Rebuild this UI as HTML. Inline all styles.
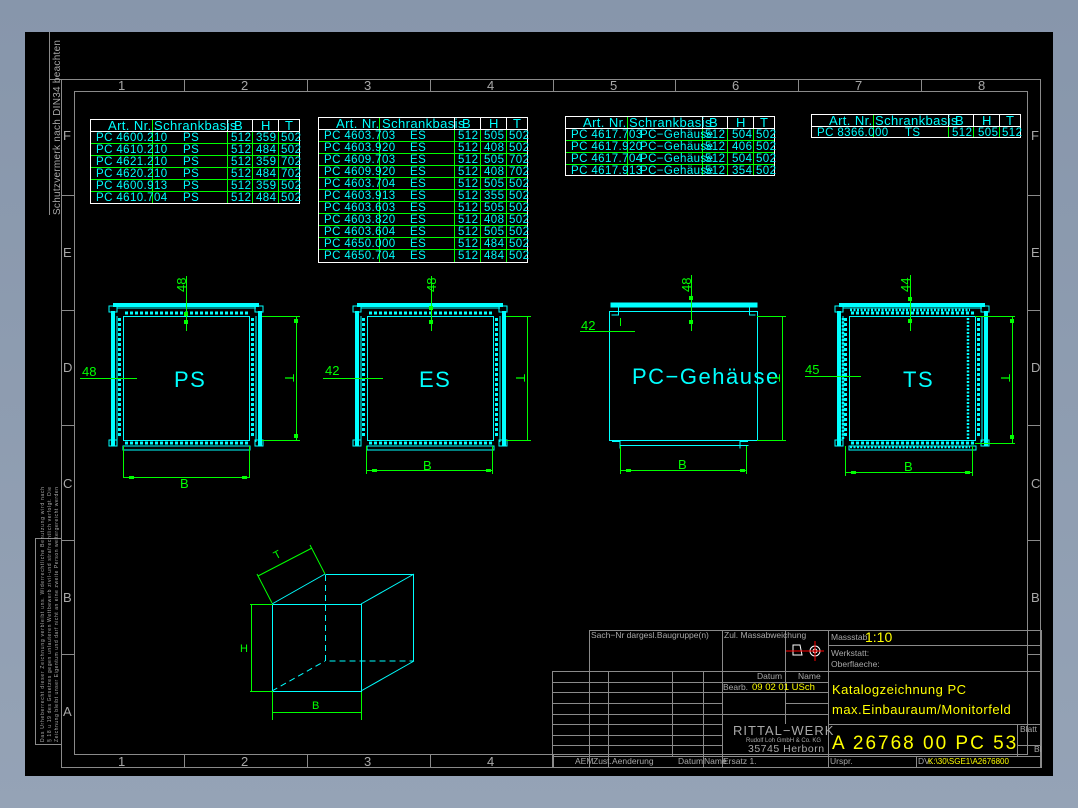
<!DOCTYPE html>
<html><head><meta charset="utf-8"><style>
html,body{margin:0;padding:0;background:#8c9bb0;}
body{width:1078px;height:808px;overflow:hidden;background:linear-gradient(#8796ab,#95a3b6);}
svg{position:absolute;left:0;top:0;}
text{font-family:"Liberation Sans",sans-serif;}
.c{fill:#00ffff;font-size:11.5px;letter-spacing:0.4px;}
.g{fill:#00ff00;}
.w{fill:#a8a8a8;}
.y{fill:#ffff00;}
.big{font-size:22px;letter-spacing:1.5px;}
</style></head><body>
<svg width="1078" height="808" viewBox="0 0 1078 808">
<defs>
<g id="cab">
 <rect x="113" y="303" width="146" height="4" fill="#00ffff"/>
 <rect x="111" y="311" width="4" height="135" fill="#00ffff"/>
 <rect x="258" y="311" width="4" height="135" fill="#00ffff"/>
 <rect x="109" y="306" width="8" height="6" fill="none" stroke="#00ffff"/>
 <rect x="255" y="306" width="8" height="6" fill="none" stroke="#00ffff"/>
 <rect x="109" y="440" width="8" height="6" fill="none" stroke="#00ffff"/>
 <rect x="255" y="440" width="8" height="6" fill="none" stroke="#00ffff"/>
 <line x1="117" y1="308" x2="256" y2="308" stroke="#00ffff"/>
 <line x1="125" y1="313" x2="248" y2="313" stroke="#00ffff" stroke-width="3" stroke-dasharray="3 2"/>
 <line x1="125" y1="443" x2="248" y2="443" stroke="#00ffff" stroke-width="3" stroke-dasharray="3 2"/>
 <line x1="119.5" y1="318" x2="119.5" y2="438" stroke="#00ffff" stroke-width="3" stroke-dasharray="3 2"/>
 <line x1="252.5" y1="318" x2="252.5" y2="438" stroke="#00ffff" stroke-width="3" stroke-dasharray="3 2"/>
 <rect x="123.5" y="316.5" width="126" height="124" fill="none" stroke="#00ffff"/>
 <line x1="117" y1="316" x2="117" y2="442" stroke="#00ffff"/>
 <line x1="256" y1="316" x2="256" y2="442" stroke="#00ffff"/>
 <rect x="123" y="446" width="127" height="4" fill="none" stroke="#00ffff"/>
</g>
</defs>
<rect x="25" y="32" width="1028" height="744" fill="#000"/>
<g stroke="#8a8a8a" fill="none" stroke-width="1">
 <rect x="61.5" y="79.5" width="979" height="688"/>
 <rect x="74.5" y="91.5" width="953" height="663"/>
 <line x1="49.5" y1="32" x2="49.5" y2="215"/>
 <line x1="49.5" y1="79.5" x2="61.5" y2="79.5"/>
 <rect x="35.5" y="538.5" width="26" height="206"/>
 <path d="M184.5 79v12M307.5 79v12M430.5 79v12M553.5 79v12M675.5 79v12M798.5 79v12M921.5 79v12M184.5 755v13M307.5 755v13M430.5 755v13M553.5 755v13M61 195.5h13M61 310.5h13M61 425.5h13M61 540.5h13M61 654.5h13M1028 195.5h13M1028 310.5h13M1028 425.5h13M1028 540.5h13M1028 654.5h13"/>
</g>
<g class="w" font-size="13">
 <text x="118" y="90">1</text><text x="241" y="90">2</text><text x="364" y="90">3</text><text x="487" y="90">4</text><text x="610" y="90">5</text><text x="732" y="90">6</text><text x="855" y="90">7</text><text x="978" y="90">8</text>
 <text x="118" y="766">1</text><text x="241" y="766">2</text><text x="364" y="766">3</text><text x="487" y="766">4</text>
 <text x="63" y="140">F</text><text x="63" y="257">E</text><text x="63" y="372">D</text><text x="63" y="488">C</text><text x="63" y="602">B</text><text x="63" y="716">A</text>
 <text x="1031" y="140">F</text><text x="1031" y="257">E</text><text x="1031" y="372">D</text><text x="1031" y="488">C</text><text x="1031" y="602">B</text>
</g>
<text class="w" font-size="10" transform="translate(60,215) rotate(-90)" textLength="175">Schutzvermerk nach DIN34 beachten</text>
<g class="w" font-size="5">
 <text transform="translate(44,742) rotate(-90)" textLength="255">Das Urheberrecht dieser Zeichnung verbleibt uns. Widerrechtliche Benutzung wird nach</text>
 <text transform="translate(51,742) rotate(-90)" textLength="255">§ 18 u 19 des Gesetzes gegen unlauteren Wettbewerb zivil-und strafrechtlich verfolgt. Die</text>
 <text transform="translate(58,742) rotate(-90)" textLength="255">Zeichnung bleibt unser Eigentum und darf nicht an eine zweite Person weitergereicht werden</text>
</g>

<!-- Table 1 -->
<g stroke="#00ff00" fill="none"><path d="M90 143.5h210M90 155.5h210M90 167.5h210M90 179.5h210M90 191.5h210M152.5 119v85M227.5 119v85M252.5 119v85M278.5 119v85"/></g>
<g stroke="#fff" fill="none"><rect x="90.5" y="119.5" width="209" height="84"/><path d="M90 131.5h210M227.5 119v12M252.5 119v12M278.5 119v12"/></g>
<g class="c">
 <text x="108" y="130" style="font-size:13px">Art. Nr.</text><text x="154" y="130" style="font-size:13px">Schrankbasis</text><text x="234" y="130" style="font-size:13px">B</text><text x="261" y="130" style="font-size:13px">H</text><text x="285" y="130" style="font-size:13px">T</text>
 <text x="96" y="141">PC 4600.210</text><text x="183" y="141">PS</text><text x="231" y="141">512</text><text x="256" y="141">359</text><text x="281" y="141">502</text>
 <text x="96" y="153">PC 4610.210</text><text x="183" y="153">PS</text><text x="231" y="153">512</text><text x="256" y="153">484</text><text x="281" y="153">502</text>
 <text x="96" y="165">PC 4621.210</text><text x="183" y="165">PS</text><text x="231" y="165">512</text><text x="256" y="165">359</text><text x="281" y="165">702</text>
 <text x="96" y="177">PC 4620.210</text><text x="183" y="177">PS</text><text x="231" y="177">512</text><text x="256" y="177">484</text><text x="281" y="177">702</text>
 <text x="96" y="189">PC 4600.913</text><text x="183" y="189">PS</text><text x="231" y="189">512</text><text x="256" y="189">359</text><text x="281" y="189">502</text>
 <text x="96" y="201">PC 4610.704</text><text x="183" y="201">PS</text><text x="231" y="201">512</text><text x="256" y="201">484</text><text x="281" y="201">502</text>
</g>

<!-- Table 2 -->
<g stroke="#00ff00" fill="none"><path d="M318 141.5h210M318 153.5h210M318 165.5h210M318 177.5h210M318 189.5h210M318 201.5h210M318 213.5h210M318 225.5h210M318 237.5h210M318 249.5h210M379.5 117v146M454.5 117v146M480.5 117v146M506.5 117v146"/></g>
<g stroke="#fff" fill="none"><rect x="318.5" y="117.5" width="209" height="145"/><path d="M318 129.5h210M454.5 117v12M480.5 117v12M506.5 117v12"/></g>
<g class="c">
 <text x="336" y="128" style="font-size:13px">Art. Nr.</text><text x="382" y="128" style="font-size:13px">Schrankbasis</text><text x="462" y="128" style="font-size:13px">B</text><text x="489" y="128" style="font-size:13px">H</text><text x="513" y="128" style="font-size:13px">T</text>
 <text x="324" y="139">PC 4603.703</text><text x="410" y="139">ES</text><text x="458" y="139">512</text><text x="484" y="139">505</text><text x="509" y="139">502</text>
 <text x="324" y="151">PC 4603.920</text><text x="410" y="151">ES</text><text x="458" y="151">512</text><text x="484" y="151">408</text><text x="509" y="151">502</text>
 <text x="324" y="163">PC 4609.703</text><text x="410" y="163">ES</text><text x="458" y="163">512</text><text x="484" y="163">505</text><text x="509" y="163">702</text>
 <text x="324" y="175">PC 4609.920</text><text x="410" y="175">ES</text><text x="458" y="175">512</text><text x="484" y="175">408</text><text x="509" y="175">702</text>
 <text x="324" y="187">PC 4603.704</text><text x="410" y="187">ES</text><text x="458" y="187">512</text><text x="484" y="187">505</text><text x="509" y="187">502</text>
 <text x="324" y="199">PC 4603.913</text><text x="410" y="199">ES</text><text x="458" y="199">512</text><text x="484" y="199">355</text><text x="509" y="199">502</text>
 <text x="324" y="211">PC 4603.603</text><text x="410" y="211">ES</text><text x="458" y="211">512</text><text x="484" y="211">505</text><text x="509" y="211">502</text>
 <text x="324" y="223">PC 4603.820</text><text x="410" y="223">ES</text><text x="458" y="223">512</text><text x="484" y="223">408</text><text x="509" y="223">502</text>
 <text x="324" y="235">PC 4603.604</text><text x="410" y="235">ES</text><text x="458" y="235">512</text><text x="484" y="235">505</text><text x="509" y="235">502</text>
 <text x="324" y="247">PC 4650.000</text><text x="410" y="247">ES</text><text x="458" y="247">512</text><text x="484" y="247">484</text><text x="509" y="247">502</text>
 <text x="324" y="259">PC 4650.704</text><text x="410" y="259">ES</text><text x="458" y="259">512</text><text x="484" y="259">484</text><text x="509" y="259">502</text>
</g>

<!-- Table 3 -->
<g stroke="#00ff00" fill="none"><path d="M565 140.5h210M565 152.5h210M565 164.5h210M627.5 116v60M702.5 116v60M727.5 116v60M753.5 116v60"/></g>
<g stroke="#fff" fill="none"><rect x="565.5" y="116.5" width="209" height="59"/><path d="M565 128.5h210M702.5 116v12M727.5 116v12M753.5 116v12"/></g>
<g class="c">
 <text x="583" y="127" style="font-size:13px">Art. Nr.</text><text x="629" y="127" style="font-size:13px">Schrankbasis</text><text x="709" y="127" style="font-size:13px">B</text><text x="736" y="127" style="font-size:13px">H</text><text x="760" y="127" style="font-size:13px">T</text>
 <text x="571" y="138">PC 4617.703</text><text x="640" y="138">PC−Gehäuse</text><text x="705" y="138">512</text><text x="732" y="138">504</text><text x="756" y="138">502</text>
 <text x="571" y="150">PC 4617.920</text><text x="640" y="150">PC−Gehäuse</text><text x="705" y="150">512</text><text x="732" y="150">406</text><text x="756" y="150">502</text>
 <text x="571" y="162">PC 4617.704</text><text x="640" y="162">PC−Gehäuse</text><text x="705" y="162">512</text><text x="732" y="162">504</text><text x="756" y="162">502</text>
 <text x="571" y="174">PC 4617.913</text><text x="640" y="174">PC−Gehäuse</text><text x="705" y="174">512</text><text x="732" y="174">354</text><text x="756" y="174">502</text>
</g>

<!-- Table 4 -->
<g stroke="#00ff00" fill="none"><path d="M873.5 114v24M948.5 114v24M973.5 114v24M999.5 114v24"/></g>
<g stroke="#fff" fill="none"><rect x="811.5" y="114.5" width="209" height="23"/><path d="M811 126.5h210M948.5 114v12M973.5 114v12M999.5 114v12"/></g>
<g class="c">
 <text x="829" y="125" style="font-size:13px">Art. Nr.</text><text x="875" y="125" style="font-size:13px">Schrankbasis</text><text x="955" y="125" style="font-size:13px">B</text><text x="982" y="125" style="font-size:13px">H</text><text x="1006" y="125" style="font-size:13px">T</text>
 <text x="817" y="136">PC 8366.000</text><text x="905" y="136">TS</text><text x="952" y="136">512</text><text x="978" y="136">505</text><text x="1002" y="136">512</text>
</g>

<!-- Cabinets -->
<use href="#cab"/>
<use href="#cab" transform="translate(244,0)"/>
<g transform="translate(726,0)"><use href="#cab"/></g>
<g stroke="#00ffff" fill="none" stroke-width="2.5" stroke-dasharray="2 1.5">
 <line x1="843" y1="318" x2="843" y2="440"/><line x1="968" y1="318" x2="968" y2="440"/>
 <line x1="850" y1="310" x2="970" y2="310"/><line x1="850" y1="447" x2="970" y2="447"/>
</g>
<!-- PC-Gehaeuse -->
<g stroke="#00ffff" fill="none">
 <rect x="611" y="303" width="146" height="4" fill="#00ffff"/>
 <path d="M610.5 311.5h8v-5M757.5 311.5h-8v-5M618.5 311v4h-7M749.5 311v4h6"/>
 <rect x="609.5" y="311.5" width="148" height="129"/>
 <path d="M612 441.5h8v7M748 441.5h-8v7M620.5 445.5h128"/>
 <line x1="620" y1="311.5" x2="748" y2="311.5"/>
</g>
<!-- cabinet labels -->
<g fill="#00ffff">
 <text class="big" x="174" y="387">PS</text><text class="big" x="419" y="387">ES</text><text class="big" x="632" y="384">PC−Gehäuse</text><text class="big" x="903" y="387">TS</text>
</g>
<!-- dimensions -->
<g stroke="#00ff00" fill="none">
 <path d="M123.5 446v32M249.5 446v32M123 477.5h127"/>
 <path d="M262 316.5h38M262 440.5h38M296.5 316v125"/>
 <path d="M186.5 276v55M80 378.5h57"/>
 <path d="M366.5 446v28M492.5 446v28M366 470.5h127"/>
 <path d="M506 316.5h25M506 440.5h25M527.5 316v125"/>
 <path d="M431.5 276v55M323 378.5h60"/>
 <path d="M620.5 446v28M746.5 446v28M620 470.5h127"/>
 <path d="M757 316.5h29M757 440.5h29M782.5 316v125"/>
 <path d="M691.5 275v56M580 331.5h55M620.5 318v8"/>
 <path d="M845.5 446v30M972.5 446v30M845 472.5h128"/>
 <path d="M975 316.5h40M975 443.5h40M1012.5 316v128"/>
 <path d="M910.5 275v56M805 376.5h56"/>
</g>
<g fill="#00ff00">
 <rect x="184" y="312" width="4" height="4"/><rect x="184" y="320" width="4" height="4"/>
 <rect x="429" y="306" width="4" height="4"/><rect x="429" y="320" width="4" height="4"/>
 <rect x="689" y="296" width="4" height="4"/><rect x="689" y="320" width="4" height="4"/>
 <rect x="908" y="297" width="4" height="4"/><rect x="908" y="319" width="4" height="4"/>
 <rect x="294" y="319" width="4" height="4"/><rect x="294" y="434" width="4" height="4"/>
 <rect x="129" y="476" width="5" height="3"/><rect x="242" y="476" width="5" height="3"/>
 <rect x="372" y="469" width="5" height="3"/><rect x="486" y="469" width="5" height="3"/>
 <rect x="626" y="469" width="5" height="3"/><rect x="740" y="469" width="5" height="3"/>
 <rect x="851" y="471" width="5" height="3"/><rect x="965" y="471" width="5" height="3"/>
 <rect x="1010" y="319" width="4" height="4"/><rect x="1010" y="435" width="4" height="4"/>
</g>
<g class="g" font-size="13">
 <text x="180" y="488">B</text><text x="423" y="470">B</text><text x="678" y="469">B</text><text x="904" y="471">B</text>
 <text x="82" y="376">48</text><text x="325" y="375">42</text><text x="581" y="330">42</text><text x="805" y="374">45</text>
 <text transform="translate(186,292) rotate(-90)">48</text><text transform="translate(436,292) rotate(-90)">48</text>
 <text transform="translate(691,292) rotate(-90)">48</text><text transform="translate(910,292) rotate(-90)">44</text>
 <text transform="translate(285,374) rotate(90)">T</text><text transform="translate(516,374) rotate(90)">T</text>
 <text transform="translate(771,374) rotate(90)">T</text><text transform="translate(1001,374) rotate(90)">T</text>
</g>

<!-- isometric box -->
<g stroke="#00ffff" fill="none">
 <rect x="272.5" y="604.5" width="89" height="87"/>
 <path d="M325.5 574.5h88v87M272 604l53-30M361 604l53-30M361 691l53-30"/>
 <path d="M325.5 575v86h88M272 691l53-30" stroke-dasharray="6 4"/>
</g>
<g stroke="#00ff00" fill="none">
 <path d="M250 604.5h23M250 691.5h23M251.5 604v87"/>
 <path d="M272.5 692v28M361.5 692v28M272 712.5h90"/>
 <path d="M272 603l-15-29M325 574l-15-29M258 576l54-28"/>
</g>
<g class="g" font-size="11"><text x="312" y="709">B</text><text x="240" y="652">H</text><text x="274" y="558" transform="rotate(-28 278 555)">T</text></g>

<!-- title block -->
<g stroke="#8a8a8a" fill="none">
 <rect x="589.5" y="630.5" width="452" height="41"/>
 <path d="M722.5 630v41M785.5 630v41M828.5 630v41M828 645.5h214"/>
 <rect x="552.5" y="671.5" width="489" height="96"/>
 <path d="M552 682.5h276M552 692.5h276M552 703.5h170M785 703.5h43M552 714.5h276M552 724.5h170M552 735.5h170M552 745.5h170M552 756.5h490"/>
 <path d="M589.5 671v97M608.5 671v97M672.5 671v85M703.5 671v97M722.5 671v97M785.5 671v53M828.5 671v97M916.5 756v12M1017.5 724v32M828 724.5h214M1017 745.5h25"/>
</g>
<g class="w" font-size="8.5">
 <text x="591" y="638">Sach−Nr dargesl.Baugruppe(n)</text>
 <text x="724" y="638">Zul. Massabweichung</text>
 <text x="831" y="640">Massstab</text>
 <text x="831" y="656">Werkstatt:</text>
 <text x="831" y="667">Oberflaeche:</text>
 <text x="757" y="679">Datum</text><text x="798" y="679">Name</text>
 <text x="723" y="690">Bearb.</text>
 <text x="1020" y="732">Blatt</text><text x="1034" y="752">Bl</text>
 <text x="575" y="764">AEM</text><text x="593" y="764">Zust.</text><text x="612" y="764">Aenderung</text>
 <text x="678" y="764">Datum</text><text x="704" y="764">Name</text><text x="723" y="764">Ersatz 1.</text>
 <text x="830" y="764">Urspr.</text><text x="918" y="764">DV:</text>
 <text x="746" y="742" font-size="6">Rudolf Loh GmbH &amp; Co. KG</text>
</g>
<text class="w" x="733" y="735" font-size="13" letter-spacing="1">RITTAL−WERK</text>
<text class="w" x="748" y="752" font-size="10.5" letter-spacing="0.5">35745 Herborn</text>
<g class="y">
 <text x="865" y="642" font-size="14">1:10</text>
 <text x="752" y="690" font-size="9.5">09 02 01 USch</text>
 <text x="832" y="694" font-size="13" letter-spacing="0.5">Katalogzeichnung PC</text>
 <text x="832" y="714" font-size="13" letter-spacing="0.5">max.Einbauraum/Monitorfeld</text>
 <text x="832" y="749" font-size="19" letter-spacing="2">A 26768 00 PC 53</text>
 <text x="928" y="764" font-size="8">K:\30\SGE1\A2676800</text>
</g>
<g stroke="#fff" fill="none"><path d="M793 645h7l2 10h-9z"/><circle cx="815" cy="651" r="5"/><circle cx="815" cy="651" r="2"/></g>
<path d="M786 651h38M815 641v20" stroke="#ff0000"/>
</svg>
</body></html>
